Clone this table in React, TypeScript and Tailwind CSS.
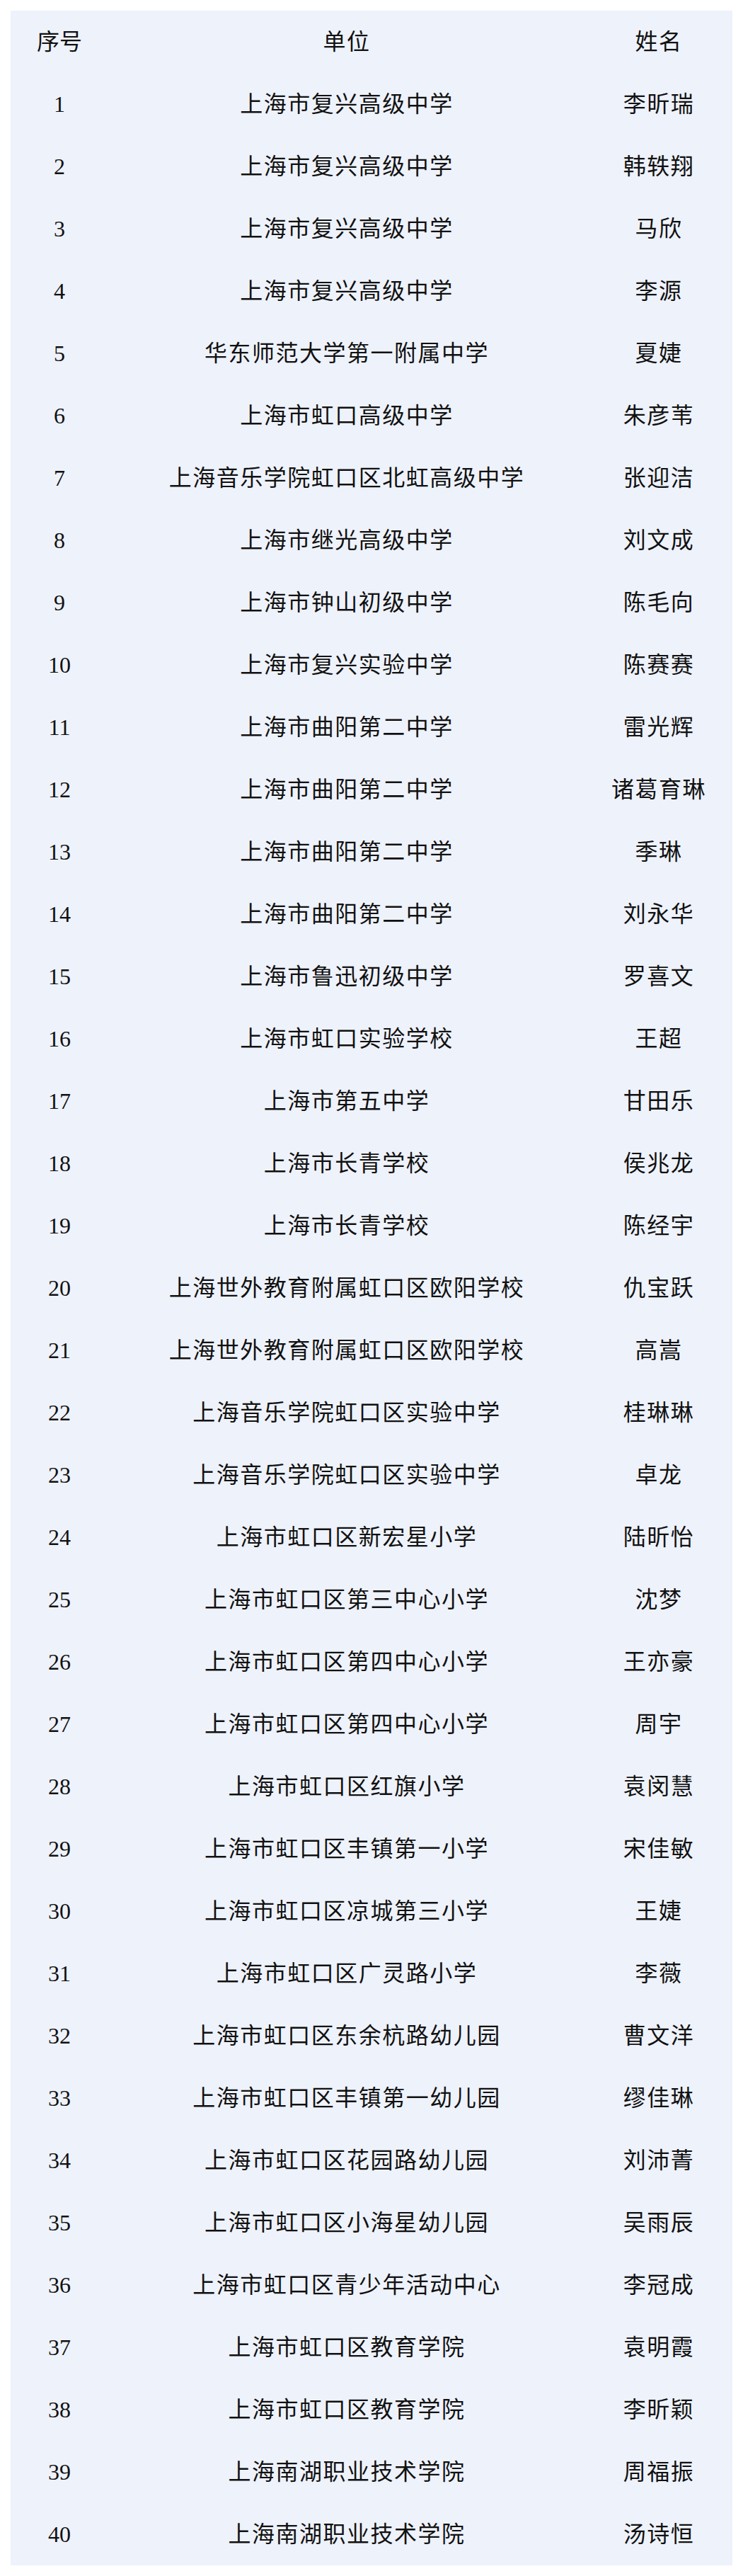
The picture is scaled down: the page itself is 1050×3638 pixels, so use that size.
import React from "react";

const rows: [string, string][] = [
  ["上海市复兴高级中学", "李昕瑞"],
  ["上海市复兴高级中学", "韩轶翔"],
  ["上海市复兴高级中学", "马欣"],
  ["上海市复兴高级中学", "李源"],
  ["华东师范大学第一附属中学", "夏婕"],
  ["上海市虹口高级中学", "朱彦苇"],
  ["上海音乐学院虹口区北虹高级中学", "张迎洁"],
  ["上海市继光高级中学", "刘文成"],
  ["上海市钟山初级中学", "陈毛向"],
  ["上海市复兴实验中学", "陈赛赛"],
  ["上海市曲阳第二中学", "雷光辉"],
  ["上海市曲阳第二中学", "诸葛育琳"],
  ["上海市曲阳第二中学", "季琳"],
  ["上海市曲阳第二中学", "刘永华"],
  ["上海市鲁迅初级中学", "罗喜文"],
  ["上海市虹口实验学校", "王超"],
  ["上海市第五中学", "甘田乐"],
  ["上海市长青学校", "侯兆龙"],
  ["上海市长青学校", "陈经宇"],
  ["上海世外教育附属虹口区欧阳学校", "仇宝跃"],
  ["上海世外教育附属虹口区欧阳学校", "高嵩"],
  ["上海音乐学院虹口区实验中学", "桂琳琳"],
  ["上海音乐学院虹口区实验中学", "卓龙"],
  ["上海市虹口区新宏星小学", "陆昕怡"],
  ["上海市虹口区第三中心小学", "沈梦"],
  ["上海市虹口区第四中心小学", "王亦豪"],
  ["上海市虹口区第四中心小学", "周宇"],
  ["上海市虹口区红旗小学", "袁闵慧"],
  ["上海市虹口区丰镇第一小学", "宋佳敏"],
  ["上海市虹口区凉城第三小学", "王婕"],
  ["上海市虹口区广灵路小学", "李薇"],
  ["上海市虹口区东余杭路幼儿园", "曹文洋"],
  ["上海市虹口区丰镇第一幼儿园", "缪佳琳"],
  ["上海市虹口区花园路幼儿园", "刘沛菁"],
  ["上海市虹口区小海星幼儿园", "吴雨辰"],
  ["上海市虹口区青少年活动中心", "李冠成"],
  ["上海市虹口区教育学院", "袁明霞"],
  ["上海市虹口区教育学院", "李昕颖"],
  ["上海南湖职业技术学院", "周福振"],
  ["上海南湖职业技术学院", "汤诗恒"],
];

function Row({ a, b, c }: { a: string; b: string; c: string }) {
  return (
    <div className="grid h-[88px] grid-cols-[138px_674px_1fr] items-center text-center">
      <div className="tracking-normal">{a}</div>
      <div>{b}</div>
      <div>{c}</div>
    </div>
  );
}

export default function App() {
  return (
    <div className="min-h-[3638px] bg-white px-[15px] pt-[15px] pb-[14px]">
      <div
        className="bg-[#eef2fb] text-[32px] leading-none tracking-[1.5px] text-[#111111]"
        style={{ fontFamily: '"Liberation Serif", "Noto Sans CJK SC", serif' }}
      >
        <Row a="序号" b="单位" c="姓名" />
        {rows.map((r, i) => (
          <Row key={i} a={String(i + 1)} b={r[0]} c={r[1]} />
        ))}
      </div>
    </div>
  );
}
